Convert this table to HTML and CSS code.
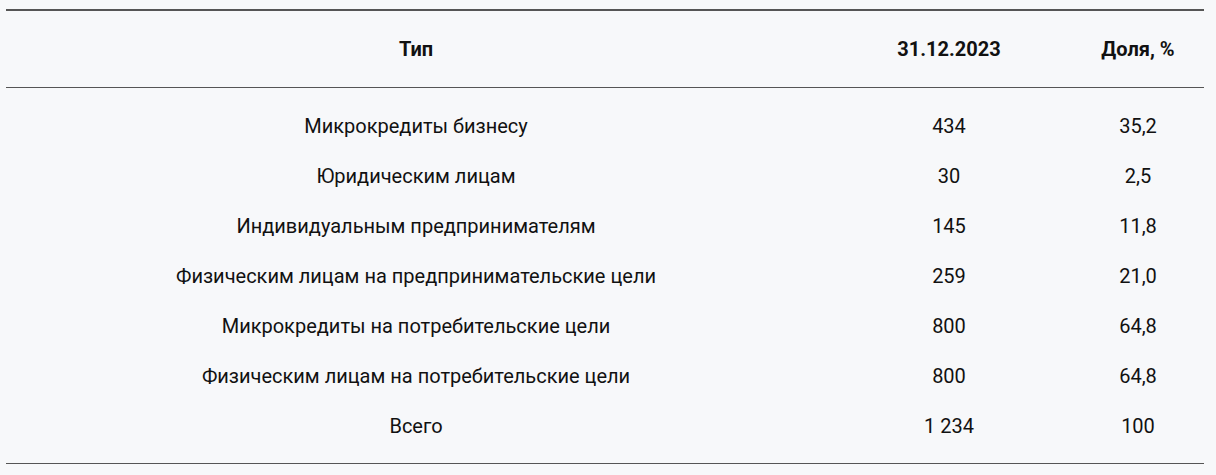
FILE: index.html
```html
<!DOCTYPE html>
<html lang="ru">
<head>
<meta charset="utf-8">
<link rel="stylesheet" href="styles.css">
</head>
<body>
<table class="tbl">
  <thead>
    <tr><th class="c1">Тип</th><th class="c2">31.12.2023</th><th class="c3">Доля, %</th></tr>
  </thead>
  <tbody>
    <tr class="first"><td>Микрокредиты бизнесу</td><td>434</td><td>35,2</td></tr>
    <tr><td>Юридическим лицам</td><td>30</td><td>2,5</td></tr>
    <tr><td>Индивидуальным предпринимателям</td><td>145</td><td>11,8</td></tr>
    <tr><td>Физическим лицам на предпринимательские цели</td><td>259</td><td>21,0</td></tr>
    <tr><td>Микрокредиты на потребительские цели</td><td>800</td><td>64,8</td></tr>
    <tr><td>Физическим лицам на потребительские цели</td><td>800</td><td>64,8</td></tr>
    <tr class="last"><td>Всего</td><td>1 234</td><td>100</td></tr>
  </tbody>
</table>
</body>
</html>
```
FILE: styles.css
```css
html, body {
  margin: 0;
  background: #f7f8fa;
}
body {
  padding: 9px 12px 0 6px;
  font-family: Roboto, "Liberation Sans", sans-serif;
  color: #111;
}
.tbl {
  width: 1198px;
  border-collapse: collapse;
  font-size: 20px;
  line-height: 26px;
}
.tbl thead tr {
  border-top: 2px solid #555;
  border-bottom: 1px solid #555;
}
.tbl tbody tr.last {
  border-bottom: 1px solid #555;
}
.tbl th {
  font-weight: 700;
  font-size: 20px;
  height: 76px;
  padding: 0;
  text-align: center;
}
.tbl td {
  padding: 12px 0;
  text-align: center;
}
.tbl tr.first td { padding-top: 25px; }
.tbl tr.last td { padding-bottom: 24px; }
.c1 { width: 820px; }
.c2 { width: 246px; }
.c3 { width: 132px; }
```
